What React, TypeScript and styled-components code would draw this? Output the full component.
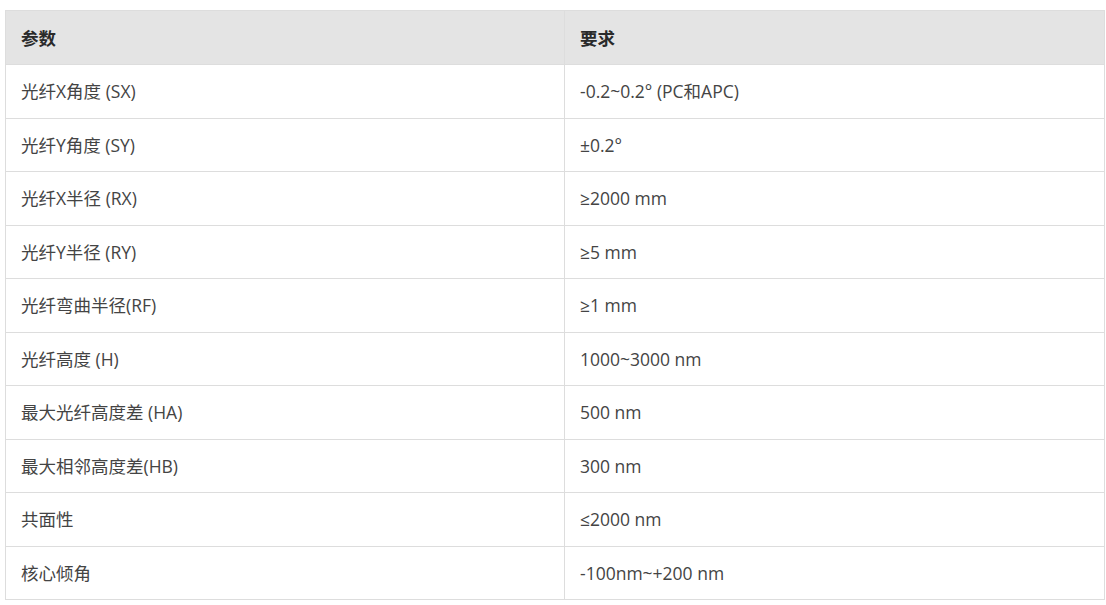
import React from 'react';
import styled, { createGlobalStyle } from 'styled-components';

const GlobalStyle = createGlobalStyle`
  html, body {
    margin: 0;
    padding: 0;
    background: #fff;
  }
  body {
    font-family: "Open Sans", "Noto Sans CJK SC", sans-serif;
  }
`;

const Wrapper = styled.div`
  padding: 10px 0 0 5px;
`;

const Table = styled.table`
  width: 1100px;
  border-collapse: collapse;
  table-layout: fixed;
  border: 1px solid #dddddd;
  font-size: 17.5px;
  color: #444;
`;

const HeadRow = styled.tr`
  height: 54px;
  background: #e4e4e4;
`;

const Row = styled.tr`
  height: 53.5px;
  background: #fff;
`;

const Th = styled.th<{ $w?: number }>`
  width: ${(p) => (p.$w ? `${p.$w}px` : 'auto')};
  text-align: left;
  font-weight: 700;
  color: #2a2a2a;
  padding: 0 15px;
  border: 1px solid #dddddd;
  vertical-align: middle;
`;

const Td = styled.td`
  padding: 0 15px;
  border: 1px solid #dddddd;
  vertical-align: middle;
  line-height: 24px;
  font-weight: 400;
`;

const rows: [string, string][] = [
  ['光纤X角度 (SX)', '-0.2~0.2° (PC和APC)'],
  ['光纤Y角度 (SY)', '±0.2°'],
  ['光纤X半径 (RX)', '≥2000 mm'],
  ['光纤Y半径 (RY)', '≥5 mm'],
  ['光纤弯曲半径(RF)', '≥1 mm'],
  ['光纤高度 (H)', '1000~3000 nm'],
  ['最大光纤高度差 (HA)', '500 nm'],
  ['最大相邻高度差(HB)', '300 nm'],
  ['共面性', '≤2000 nm'],
  ['核心倾角', '-100nm~+200 nm'],
];

const App: React.FC = () => {
  return (
    <>
      <GlobalStyle />
      <Wrapper>
        <Table>
          <thead>
            <HeadRow>
              <Th $w={528}>参数</Th>
              <Th>要求</Th>
            </HeadRow>
          </thead>
          <tbody>
            {rows.map(([param, req], i) => (
              <Row key={i}>
                <Td>{param}</Td>
                <Td>{req}</Td>
              </Row>
            ))}
          </tbody>
        </Table>
      </Wrapper>
    </>
  );
};

export default App;
